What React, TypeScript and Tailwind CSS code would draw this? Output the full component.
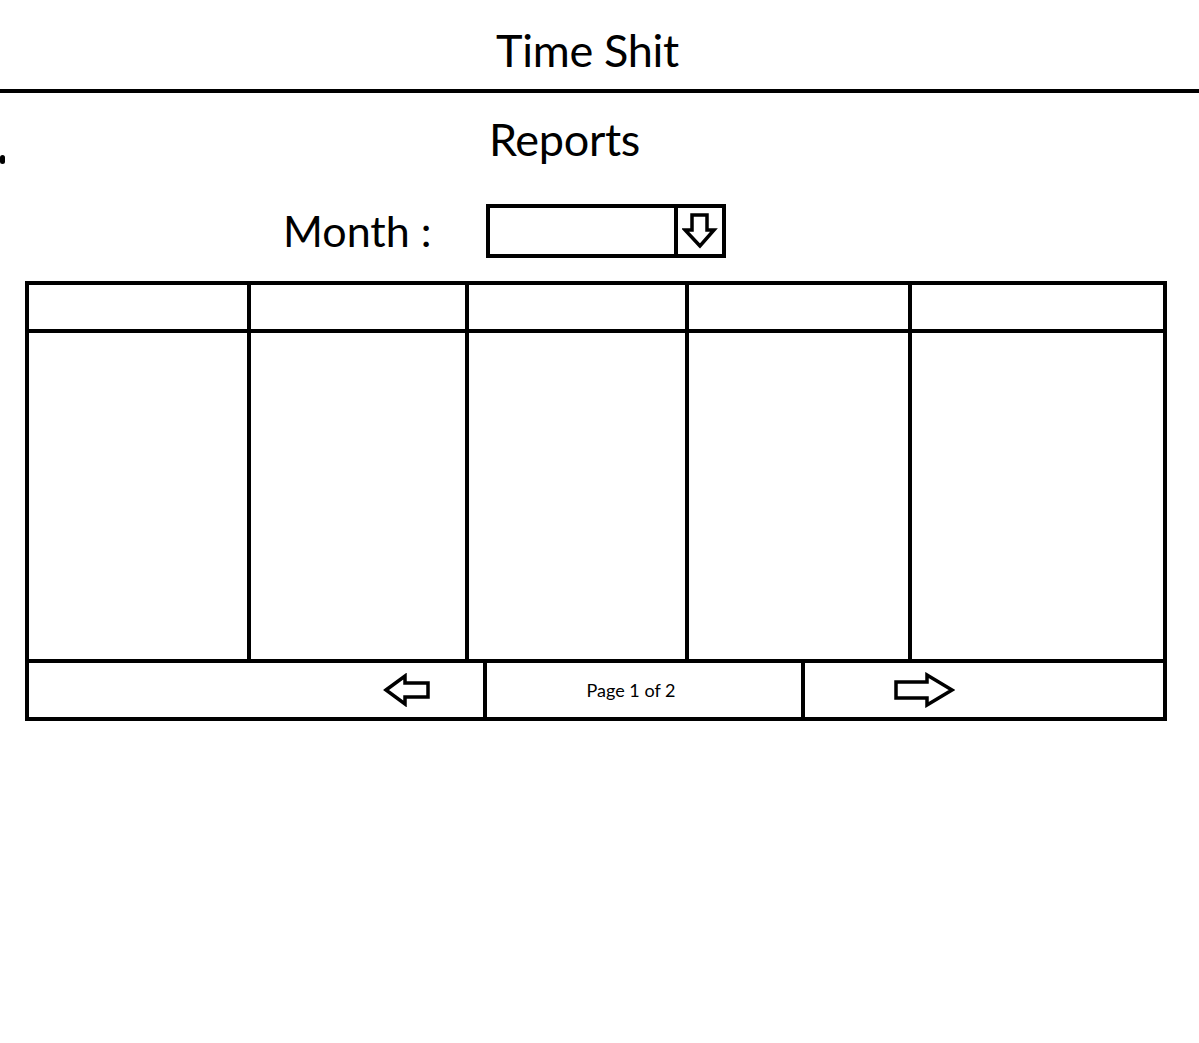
import React from "react";

const LeftArrow = () => (
  <svg width="48" height="34" viewBox="0 0 48 34" className="block">
    <polygon points="3,17 22,3 22,10 45,10 45,24 22,24 22,31" fill="white" stroke="black" strokeWidth="3.5" strokeLinejoin="miter" />
  </svg>
);

const RightArrow = () => (
  <svg width="62" height="36" viewBox="0 0 62 36" className="block">
    <polygon points="59,18 34,3 34,10 3,10 3,26 34,26 34,33" fill="white" stroke="black" strokeWidth="3.5" strokeLinejoin="miter" />
  </svg>
);

const DownArrow = () => (
  <svg width="36" height="38" viewBox="0 0 36 38" className="block">
    <polygon points="18,34 3,18 10,18 10,3 25,3 25,18 32,18" fill="white" stroke="black" strokeWidth="3.5" strokeLinejoin="miter" />
  </svg>
);

export default function App() {
  const font = { fontFamily: "Lato, 'Open Sans', sans-serif" };
  return (
    <div className="relative w-[1199px] h-[1043px] bg-white text-black overflow-hidden" style={font}>
      <div className="absolute left-0 top-[155px] w-[5px] h-[9px] bg-black rounded-sm" />
      <div className="flex flex-col">
        <div className="h-[89px] flex items-start justify-center pt-[21px] pr-[24px]">
          <h1 className="text-[45px] leading-[58px] tracking-[-0.3px]">Time Shit</h1>
        </div>
        <div className="h-[4px] bg-black w-full" />
        <div className="flex justify-center pr-[70px] pt-[17px] h-[100px]">
          <h2 className="text-[45px] leading-[58px] tracking-[-0.3px]">Reports</h2>
        </div>
        <div className="flex items-center h-[56px] mt-[10px]">
          <span className="ml-[283px] text-[43px] leading-[56px] w-[203px]">Month :</span>
          <div className="flex w-[240px] h-[54px] border-[4px] border-black">
            <div className="flex-1 border-r-[4px] border-black" />
            <div className="w-[44px] flex items-center justify-center">
              <DownArrow />
            </div>
          </div>
        </div>
        <div className="ml-[25px] mt-[22px] w-[1142px] border-[4px] border-black flex flex-col">
          <div className="grid grid-cols-[222px_218px_220px_223px_1fr] h-[48px] border-b-[4px] border-black">
            <div className="border-r-[4px] border-black" />
            <div className="border-r-[4px] border-black" />
            <div className="border-r-[4px] border-black" />
            <div className="border-r-[4px] border-black" />
            <div />
          </div>
          <div className="grid grid-cols-[222px_218px_220px_223px_1fr] h-[330px] border-b-[4px] border-black">
            <div className="border-r-[4px] border-black" />
            <div className="border-r-[4px] border-black" />
            <div className="border-r-[4px] border-black" />
            <div className="border-r-[4px] border-black" />
            <div />
          </div>
          <div className="grid grid-cols-[458px_318px_1fr] h-[54px]">
            <div className="border-r-[4px] border-black flex items-center justify-end pr-[52px]">
              <LeftArrow />
            </div>
            <div className="border-r-[4px] border-black flex items-center justify-center pr-[26px]">
              <span className="text-[18px]">Page 1 of 2</span>
            </div>
            <div className="flex items-center pl-[88px]">
              <RightArrow />
            </div>
          </div>
        </div>
      </div>
    </div>
  );
}
